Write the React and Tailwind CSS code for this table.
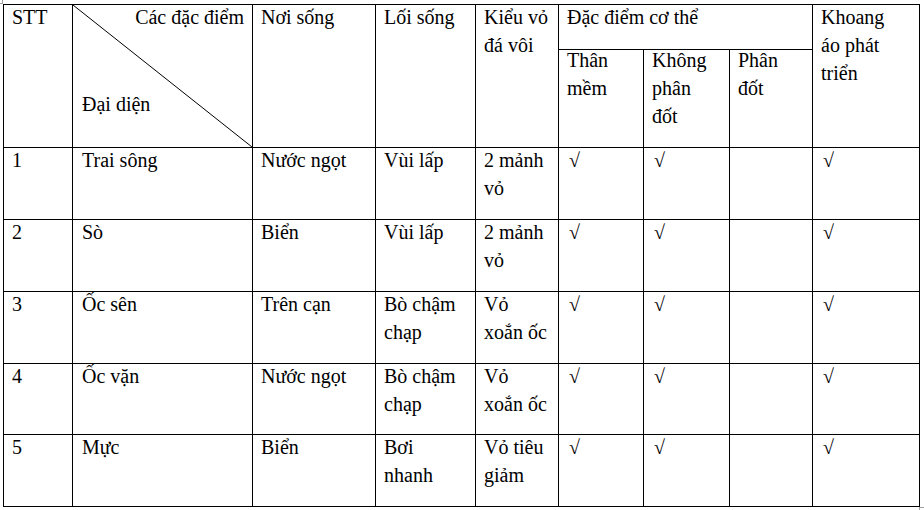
import React from "react";

const rows = [
  { stt: "1", name: "Trai sông", habitat: "Nước ngọt", life: "Vùi lấp", shell: ["2 mảnh", "vỏ"], soft: true, noSeg: true, seg: false, mantle: true, h: "h-[72px]" },
  { stt: "2", name: "Sò", habitat: "Biển", life: "Vùi lấp", shell: ["2 mảnh", "vỏ"], soft: true, noSeg: true, seg: false, mantle: true, h: "h-[72px]" },
  { stt: "3", name: "Ốc sên", habitat: "Trên cạn", life: ["Bò chậm", "chạp"], shell: ["Vỏ", "xoắn ốc"], soft: true, noSeg: true, seg: false, mantle: true, h: "h-[72px]" },
  { stt: "4", name: "Ốc vặn", habitat: "Nước ngọt", life: ["Bò chậm", "chạp"], shell: ["Vỏ", "xoắn ốc"], soft: true, noSeg: true, seg: false, mantle: true, h: "h-[71px]" },
  { stt: "5", name: "Mực", habitat: "Biển", life: ["Bơi", "nhanh"], shell: ["Vỏ tiêu", "giảm"], soft: true, noSeg: true, seg: false, mantle: true, h: "h-[72px]" },
];

const Lines = ({ value }) => {
  const parts = Array.isArray(value) ? value : [value];
  return parts.map((p, i) => (
    <div key={i} className="whitespace-nowrap">
      {p}
    </div>
  ));
};

// shift: how far the text sits above the cell's top edge
const Cell = ({ children, className = "", shift = "-mt-[2px]", ...props }) => (
  <td
    className={`border border-black align-top pl-[8px] pr-[6px] pt-0 pb-0 ${className}`}
    {...props}
  >
    <div className={shift}>{children}</div>
  </td>
);

const Check = ({ on }) => (on ? <span className="pl-[2px]">√</span> : null);

const App = () => {
  return (
    <div className="w-[924px] h-[510px] bg-white relative overflow-hidden font-['Liberation_Serif','Times_New_Roman',serif]">
      {/* word boundary marks */}
      <div className="absolute left-0 top-0 w-[3px] h-[4px] border-r border-b border-[#a0a0a0]" />
      <div className="absolute left-[919px] top-[507px] w-[5px] h-[3px] border-l border-t border-[#a0a0a0]" />

      <div className="pt-[4px] pl-[3px]">
        <table className="table-fixed border-collapse text-black text-[20px] leading-[28px] w-[916px]">
          <colgroup>
            <col className="w-[69px]" />
            <col className="w-[180px]" />
            <col className="w-[123px]" />
            <col className="w-[100px]" />
            <col className="w-[83px]" />
            <col className="w-[85px]" />
            <col className="w-[86px]" />
            <col className="w-[83px]" />
            <col className="w-[107px]" />
          </colgroup>
          <tbody>
            <tr className="h-[45px]">
              <Cell rowSpan={2}>STT</Cell>
              <td rowSpan={2} className="border border-black align-top p-0 relative">
                <svg
                  className="absolute inset-0 w-full h-full"
                  preserveAspectRatio="none"
                  viewBox="0 0 100 100"
                >
                  <line
                    x1="0"
                    y1="0"
                    x2="100"
                    y2="100"
                    stroke="black"
                    strokeWidth="1"
                    vectorEffect="non-scaling-stroke"
                  />
                </svg>
                <div className="-mt-[2px] pr-[8px] text-right">Các đặc điểm</div>
                <div className="mt-[59px] pl-[9px]">Đại diện</div>
              </td>
              <Cell rowSpan={2}>Nơi sống</Cell>
              <Cell rowSpan={2}>Lối sống</Cell>
              <Cell rowSpan={2}>
                <Lines value={["Kiểu vỏ", "đá vôi"]} />
              </Cell>
              <Cell colSpan={3}>Đặc điểm cơ thể</Cell>
              <Cell rowSpan={2}>
                <Lines value={["Khoang", "áo phát", "triển"]} />
              </Cell>
            </tr>
            <tr className="h-[98px]">
              <Cell shift="-mt-[4px]">
                <Lines value={["Thân", "mềm"]} />
              </Cell>
              <Cell shift="-mt-[4px]">
                <Lines value={["Không", "phân", "đốt"]} />
              </Cell>
              <Cell shift="-mt-[4px]">
                <Lines value={["Phân", "đốt"]} />
              </Cell>
            </tr>
            {rows.map((r) => (
              <tr key={r.stt} className={r.h}>
                <Cell>{r.stt}</Cell>
                <Cell className="pl-[9px]">{r.name}</Cell>
                <Cell>{r.habitat}</Cell>
                <Cell>
                  <Lines value={r.life} />
                </Cell>
                <Cell>
                  <Lines value={r.shell} />
                </Cell>
                <Cell>
                  <Check on={r.soft} />
                </Cell>
                <Cell>
                  <Check on={r.noSeg} />
                </Cell>
                <Cell>
                  <Check on={r.seg} />
                </Cell>
                <Cell>
                  <Check on={r.mantle} />
                </Cell>
              </tr>
            ))}
          </tbody>
        </table>
      </div>
    </div>
  );
};

export default App;
